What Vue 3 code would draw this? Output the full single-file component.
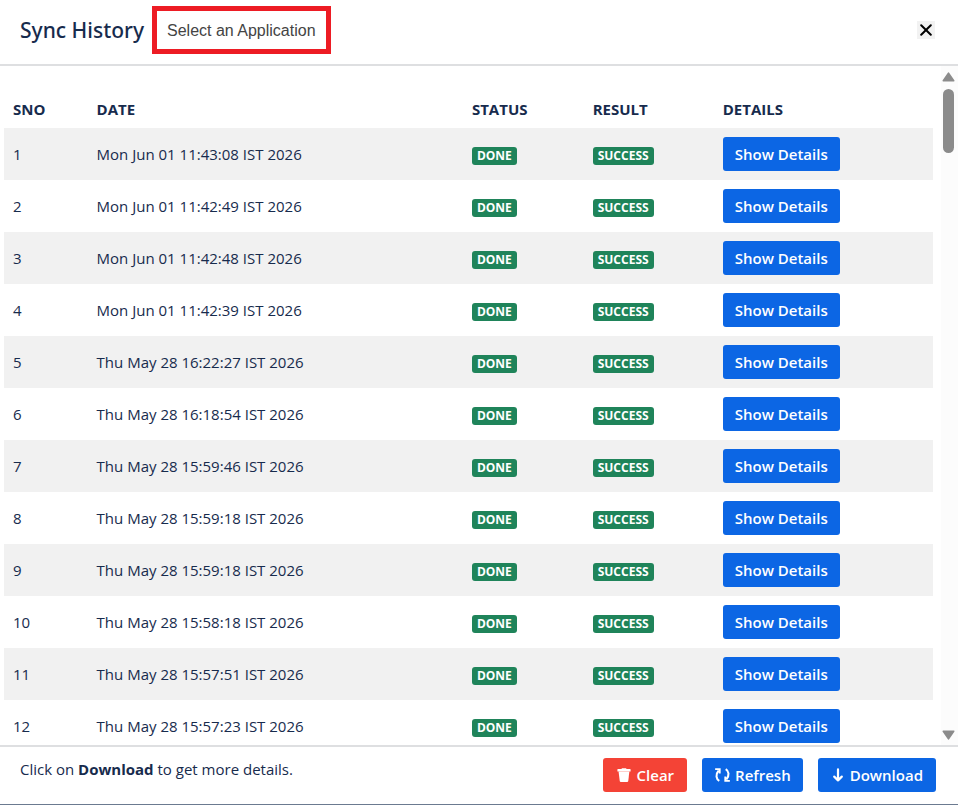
<script setup>
import { ref } from 'vue'

const dates = [
  'Mon Jun 01 11:43:08 IST 2026',
  'Mon Jun 01 11:42:49 IST 2026',
  'Mon Jun 01 11:42:48 IST 2026',
  'Mon Jun 01 11:42:39 IST 2026',
  'Thu May 28 16:22:27 IST 2026',
  'Thu May 28 16:18:54 IST 2026',
  'Thu May 28 15:59:46 IST 2026',
  'Thu May 28 15:59:18 IST 2026',
  'Thu May 28 15:59:18 IST 2026',
  'Thu May 28 15:58:18 IST 2026',
  'Thu May 28 15:57:51 IST 2026',
  'Thu May 28 15:57:23 IST 2026',
]
const rows = ref(dates.map((date, i) => ({ sno: i + 1, date, status: 'DONE', result: 'SUCCESS' })))
</script>

<template>
  <main class="dialog">
    <header class="head">
      <h1>Sync History</h1>
      <button type="button" class="picker">Select an Application</button>
      <button type="button" class="close" aria-label="Close">
        <svg width="12" height="12" viewBox="0 0 12 12" fill="none" stroke="#000" stroke-width="2" stroke-linecap="round">
          <path d="M1.2 1.2 10.8 10.8M10.8 1.2 1.2 10.8" />
        </svg>
      </button>
    </header>

    <section class="body">
      <div class="scroll">
        <table>
          <thead>
            <tr>
              <th class="c-sno">SNO</th>
              <th class="c-date">DATE</th>
              <th class="c-status">STATUS</th>
              <th class="c-result">RESULT</th>
              <th>DETAILS</th>
            </tr>
          </thead>
          <tbody>
            <tr v-for="row in rows" :key="row.sno">
              <td>{{ row.sno }}</td>
              <td>{{ row.date }}</td>
              <td class="tag"><span class="badge">{{ row.status }}</span></td>
              <td class="tag"><span class="badge">{{ row.result }}</span></td>
              <td><button type="button" class="btn">Show Details</button></td>
            </tr>
          </tbody>
        </table>
      </div>
      <div class="bar" aria-hidden="true">
        <svg width="13" height="10" viewBox="0 0 13 10"><path d="M6.5 1.2 11.7 8.8H1.3Z" fill="#8b8b8b" stroke="#8b8b8b" stroke-width="1.6" stroke-linejoin="round" /></svg>
        <div class="track"><div class="thumb"></div></div>
        <svg width="13" height="10" viewBox="0 0 13 10"><path d="M6.5 8.8 11.7 1.2H1.3Z" fill="#8b8b8b" stroke="#8b8b8b" stroke-width="1.6" stroke-linejoin="round" /></svg>
      </div>
    </section>

    <footer class="foot">
      <p>Click on <strong>Download</strong> to get more details.</p>
      <div class="actions">
        <button type="button" class="btn wide danger">
          <svg width="16" height="16" viewBox="0 0 16 16" fill="#fff">
            <path d="M1.4 2.4Q1.4 2 1.8 2H5.4L6 1.2H10L10.6 2H14.2Q14.6 2 14.6 2.4V4.6H1.4Z" />
            <path d="M2.6 4.6H13.4L12.2 14.2Q12 15 11.2 15H4.8Q4 15 3.8 14.2Z" />
          </svg>
          Clear
        </button>
        <button type="button" class="btn">
          <svg width="17" height="16" viewBox="0 0 18 16" fill="none" stroke="#fff" stroke-width="2.2">
            <path d="M5.6 14.2C2.4 12.2 1.2 7.6 5 3.2" />
            <path d="M1.2 1.7H6.1V6.4" stroke-width="1.9" />
            <path d="M12.4 1.8C15.6 3.8 16.8 8.4 13 12.8" />
            <path d="M16.8 14.3H11.9V9.6" stroke-width="1.9" />
          </svg>
          Refresh
        </button>
        <button type="button" class="btn wide">
          <svg width="14" height="16" viewBox="0 0 14 16" fill="none" stroke="#fff" stroke-width="2.2" stroke-linecap="round" stroke-linejoin="round">
            <path d="M7 2.4V13.4M3.2 9.6 7 13.4 10.8 9.6" />
          </svg>
          Download
        </button>
      </div>
    </footer>
  </main>
</template>

<style>
body {
  margin: 0;
  background: #fff;
}
</style>

<style scoped>
.dialog {
  box-sizing: border-box;
  display: flex;
  flex-direction: column;
  height: 100vh;
  border-bottom: 1px solid #6b7a90;
  color: #172b4d;
  font-family: "Open Sans", "Noto Sans", sans-serif;
  font-size: 15px;
  line-height: 20px;
}
button {
  font: inherit;
  cursor: pointer;
}
.head {
  display: flex;
  align-items: center;
  gap: 8px;
  padding: 6px 23px 10px 20px;
  border-bottom: 2px solid #dedfe1;
}
h1 {
  margin: 0;
  font-family: "Noto Sans", "Open Sans", sans-serif;
  font-size: 21px;
  font-weight: 500;
  line-height: 28px;
}
.picker {
  padding: 10px 10px 8px;
  border: 5px solid #ed1c24;
  background: #fff;
  color: #444;
  font-family: "Liberation Sans", sans-serif;
  font-size: 16px;
  line-height: 20px;
}
.close {
  display: flex;
  align-items: center;
  justify-content: center;
  width: 18px;
  height: 18px;
  margin-left: auto;
  padding: 0;
  border: 0;
  background: #f2f2f2;
}
.body {
  display: flex;
  flex: 1;
  min-height: 0;
}
.scroll {
  flex: 1;
  overflow-y: auto;
  padding: 24px 8px 0 4px;
  scrollbar-width: none;
}
table {
  width: 100%;
  border-collapse: collapse;
  table-layout: fixed;
}
th,
td {
  box-sizing: border-box;
  padding: 9px;
  text-align: left;
  vertical-align: middle;
}
th {
  font-weight: 700;
}
.tag {
  padding-top: 13px;
}
.c-sno { width: 9%; }
.c-date { width: 40.4%; }
.c-status { width: 13%; }
.c-result { width: 14%; }
tbody tr:nth-child(odd) {
  background: #f1f1f1;
}
.badge {
  display: block;
  width: fit-content;
  padding: 1px 5px;
  border-radius: 3px;
  background: #1f845a;
  color: #fff;
  font-size: 12px;
  font-weight: 700;
  line-height: 16px;
}
.btn {
  display: flex;
  align-items: center;
  gap: 4px;
  padding: 7px 12px;
  border: 0;
  border-radius: 3px;
  background: #0c66e4;
  color: #fff;
  font-weight: 600;
  line-height: 20px;
  white-space: nowrap;
}
.wide {
  gap: 5px;
  padding: 7px 13px;
}
.bar {
  box-sizing: border-box;
  display: flex;
  flex-direction: column;
  align-items: center;
  gap: 7px;
  width: 17px;
  padding: 6px 2px 5px 0;
  background: #fcfcfc;
}
.track {
  flex: 1;
}
.thumb {
  width: 11px;
  height: 64px;
  border-radius: 6px;
  background: #8b8b8b;
}
.foot {
  display: flex;
  justify-content: space-between;
  padding: 11px 22px 12px 20px;
  border-top: 2px solid #dedfe1;
}
.foot p {
  margin: 1px 0 0;
}
.actions {
  display: flex;
  gap: 15px;
}
.danger {
  background: #f44336;
}
</style>
